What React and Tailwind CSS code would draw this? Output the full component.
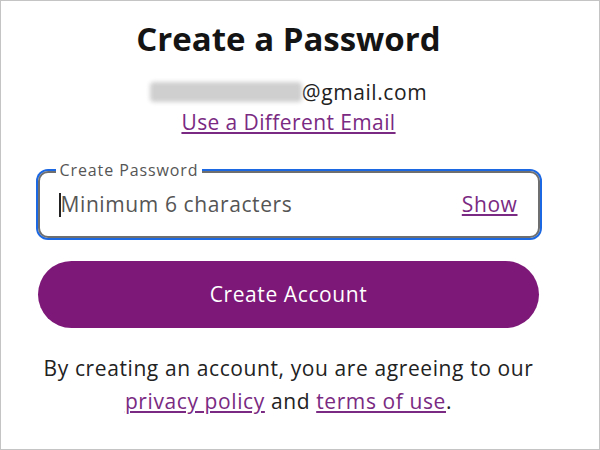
export default function App() {
  return (
    <div className="w-[600px] h-[450px] bg-white border border-[#c4c4c4]" style={{ fontFamily: '"Open Sans", Lato, sans-serif' }}>
      <div className="w-[575px] flex flex-col items-center text-[#1f1f1f] tracking-[0.6px]">
        <h1 className="mt-[18px] text-[33px] leading-[40px] font-bold tracking-normal text-[#141414]">Create a Password</h1>
        <div className="mt-[21px] flex items-center text-[21px] leading-[24px] text-[#222]">
          <span className="inline-block w-[152px] h-[20px] bg-[#cfcfcf] blur-[2px] rounded-sm"></span>
          <span>@gmail.com</span>
        </div>
        <a className="mt-[6px] text-[21px] leading-[24px] tracking-[0.4px] text-[#7a2a82] underline underline-offset-2">Use a Different Email</a>
        <div className="relative mt-[37px] w-[502px] h-[67px] rounded-[10px] border-2 border-[#6f6f6f] ring-2 ring-[#1c68e3] flex items-center pl-[19px] pr-[20px]">
          <span className="absolute left-[16px] top-[-12px] bg-white px-[4px] text-[16px] leading-[18px] tracking-[0.9px] text-[#555]">Create Password</span>
          <span className="w-[2px] h-[24px] bg-[#222]"></span>
          <span className="flex-1 text-[21px] text-[#555]">Minimum 6 characters</span>
          <a className="text-[21px] text-[#7a2a82] underline underline-offset-2">Show</a>
        </div>
        <button className="mt-[23px] w-[501px] h-[67px] rounded-full bg-[#7d1878] text-white text-[21px] font-medium">Create Account</button>
        <p className="mt-[24px] text-center text-[21px] leading-[33px] text-[#222]">
          By creating an account, you are agreeing to our<br />
          <a className="text-[#7a2a82] underline underline-offset-2">privacy policy</a> and <a className="text-[#7a2a82] underline underline-offset-2">terms of use</a>.
        </p>
      </div>
    </div>
  );
}
